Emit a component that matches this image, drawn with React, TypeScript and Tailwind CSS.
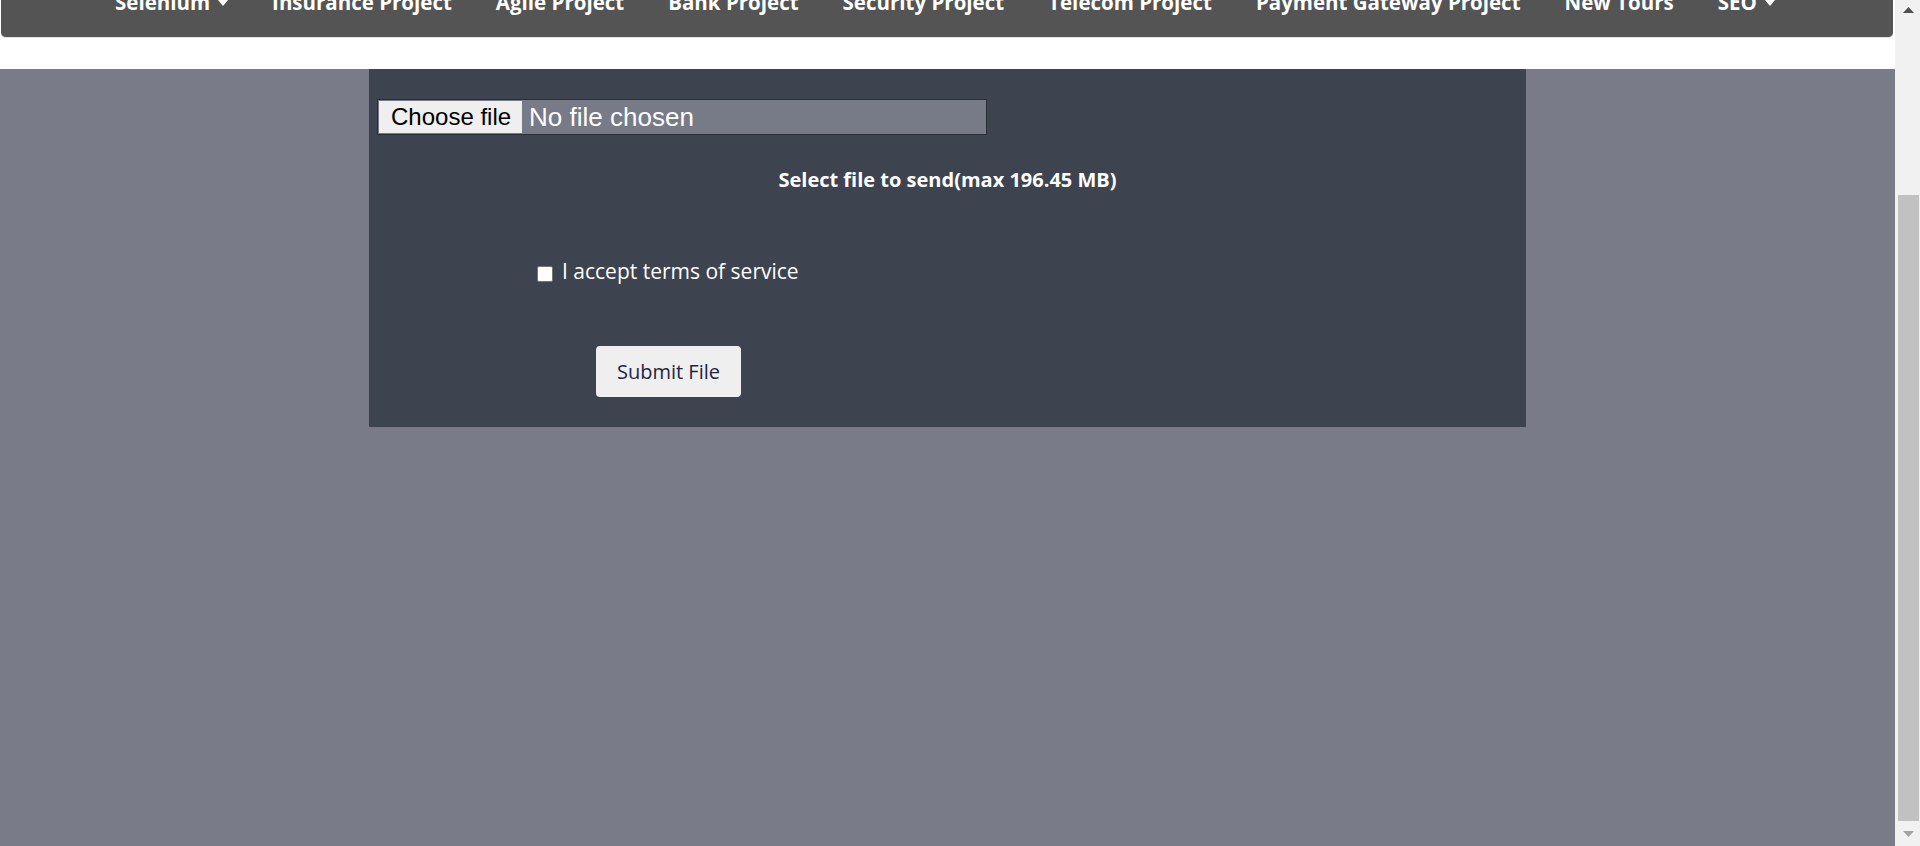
import React from "react";

const qs = { fontFamily: '"Open Sans", "Noto Sans", sans-serif' };

function Caret() {
  return (
    <svg width="10" height="6" viewBox="0 0 10 6" className="ml-[8px] mt-[2px]">
      <path d="M0 0 L10 0 L5 6 Z" fill="white" />
    </svg>
  );
}

export default function App() {
  const items: { label: string; caret?: boolean }[] = [
    { label: "Selenium", caret: true },
    { label: "Insurance Project" },
    { label: "Agile Project" },
    { label: "Bank Project" },
    { label: "Security Project" },
    { label: "Telecom Project" },
    { label: "Payment Gateway Project" },
    { label: "New Tours" },
    { label: "SEO", caret: true },
  ];
  return (
    <div className="w-[1920px] h-[846px] flex overflow-hidden bg-[#797c88]">
      <div className="flex-1 flex flex-col">
        <div className="bg-white h-[69px] flex flex-col">
          <nav
            className="h-[38px] ml-[1px] mr-[2px] bg-[#545454] rounded-b-[5px] border-b border-[#e2e2e2] overflow-hidden"
            style={qs}
          >
            <ul className="flex items-center gap-[44px] pl-[114px] -mt-[10px] text-white font-bold text-[20.5px] leading-[24px]">
              {items.map((it) => (
                <li key={it.label} className="flex items-center whitespace-nowrap">
                  {it.label}
                  {it.caret && <Caret />}
                </li>
              ))}
            </ul>
          </nav>
        </div>
        <div className="flex-1 pl-[369px]">
          <div className="w-[1157px] bg-[#3d444f] pt-[30px] pb-[30px] pl-[8px]">
            <div
              className="flex w-[610px] h-[36px] border border-[#2a2e35] bg-[#777a87] p-[1px]"
              style={{ fontFamily: '"Liberation Sans", Arial, sans-serif' }}
            >
              <div className="bg-[#efefef] h-full pl-[12px] pr-[11px] flex items-center text-black text-[24px]">Choose file</div>
              <div className="flex items-center pl-[7px] text-white text-[26px]">No file chosen</div>
            </div>
            <div className="text-center pr-[8px] mt-[32px] text-white font-bold text-[20px] leading-[26px]" style={qs}>
              Select file to send(max 196.45 MB)
            </div>
            <div className="flex items-start ml-[160px] mt-[65px]" style={qs}>
              <div className="w-[16px] h-[16px] mt-[8px] bg-white border border-[#767676] rounded-[2px]" />
              <span className="ml-[9px] text-white text-[21px] leading-[26px]">I accept terms of service</span>
            </div>
            <div className="ml-[219px] mt-[62px]">
              <button
                className="w-[145px] h-[51px] bg-[#efefef] rounded-[4px] text-[#1f2545] text-[20px]"
                style={qs}
              >
                Submit File
              </button>
            </div>
          </div>
        </div>
      </div>
      <div className="w-[25px] h-full bg-[#f1f1f1] flex flex-col items-center pl-[2px]">
        <div className="h-[20px] flex items-center justify-center">
          <svg width="11" height="6" viewBox="0 0 11 6"><path d="M0 6 L11 6 L5.5 0 Z" fill="#505050" /></svg>
        </div>
        <div className="h-[175px]" />
        <div className="w-[21px] h-[626px] bg-[#c1c1c1]" />
        <div className="flex-1 flex items-center justify-center">
          <svg width="11" height="6" viewBox="0 0 11 6"><path d="M0 0 L11 0 L5.5 6 Z" fill="#a3a3a3" /></svg>
        </div>
      </div>
    </div>
  );
}
